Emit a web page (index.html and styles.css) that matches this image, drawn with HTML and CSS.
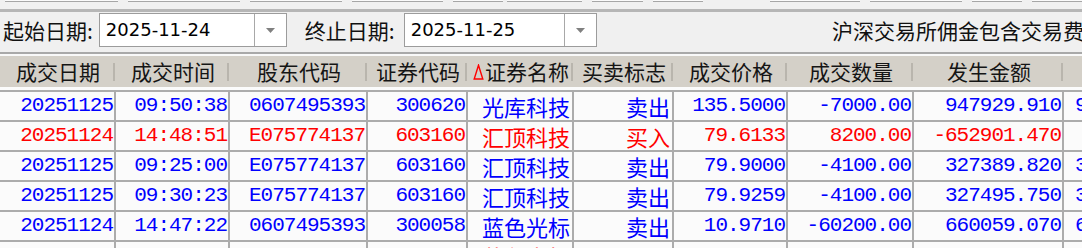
FILE: index.html
```html
<!DOCTYPE html>
<html lang="zh-CN">
<head>
<meta charset="utf-8">
<title>成交查询</title>
<link rel="stylesheet" href="styles.css">
</head>
<body>
<div class="topbar">
  <span class="tb w113"></span>
  <span class="tb w112"></span>
  <span class="tb w92"></span>
  <span class="tb w91"></span>
  <span class="tb w50"></span>
  <span class="tb w75 tight"></span>
  <span class="tb w51"></span>
  <span class="tb w50"></span>
  <span class="tb w90 far"></span>
  <span class="tb w92"></span>
  <span class="tb w50"></span>
  <span class="tb w60"></span>
</div>
<div class="toolbar">
  <span class="lbl">起始日期:</span>
  <div class="combo c1">
    <span class="val">2025-11-24</span>
    <span class="drop"><svg width="9" height="5" viewBox="0 0 9 5"><path d="M0 0H9L4.5 5Z" fill="#808080"/></svg></span>
  </div>
  <span class="lbl l2">终止日期:</span>
  <div class="combo c2">
    <span class="val">2025-11-25</span>
    <span class="drop"><svg width="9" height="5" viewBox="0 0 9 5"><path d="M0 0H9L4.5 5Z" fill="#808080"/></svg></span>
  </div>
  <div class="note">沪深交易所佣金包含交易费用</div>
</div>
<div class="head">
  <span class="hc">成交日期</span>
  <span class="hc">成交时间</span>
  <span class="hc">股东代码</span>
  <span class="hc">证券代码</span>
  <span class="hc"><svg class="sort" width="11" height="16" viewBox="0 0 11 16"><path d="M5.5 1.2L9.8 15H1.2Z" fill="none" stroke="#ff0000" stroke-width="1.4"/></svg>证券名称</span>
  <span class="hc">买卖标志</span>
  <span class="hc">成交价格</span>
  <span class="hc">成交数量</span>
  <span class="hc">发生金额</span>
  <span class="hc last"></span>
</div>
<div class="tbody">
  <div class="row first blue">
    <span class="num">20251125</span><span class="num">09:50:38</span><span class="num">0607495393</span><span class="num">300620</span><span class="cn">光库科技</span><span class="cn">卖出</span><span class="num">135.5000</span><span class="num">-7000.00</span><span class="num">947929.910</span><span class="num extra">947934.56</span>
  </div>
  <div class="row red">
    <span class="num">20251124</span><span class="num">14:48:51</span><span class="num">E075774137</span><span class="num">603160</span><span class="cn">汇顶科技</span><span class="cn">买入</span><span class="num">79.6133</span><span class="num">8200.00</span><span class="num">-652901.470</span><span class="num extra"></span>
  </div>
  <div class="row blue">
    <span class="num">20251125</span><span class="num">09:25:00</span><span class="num">E075774137</span><span class="num">603160</span><span class="cn">汇顶科技</span><span class="cn">卖出</span><span class="num">79.9000</span><span class="num">-4100.00</span><span class="num">327389.820</span><span class="num extra">327391.44</span>
  </div>
  <div class="row blue">
    <span class="num">20251125</span><span class="num">09:30:23</span><span class="num">E075774137</span><span class="num">603160</span><span class="cn">汇顶科技</span><span class="cn">卖出</span><span class="num">79.9259</span><span class="num">-4100.00</span><span class="num">327495.750</span><span class="num extra">327497.38</span>
  </div>
  <div class="row blue">
    <span class="num">20251124</span><span class="num">14:47:22</span><span class="num">0607495393</span><span class="num">300058</span><span class="cn">蓝色光标</span><span class="cn">卖出</span><span class="num">10.9710</span><span class="num">-60200.00</span><span class="num">660059.070</span><span class="num extra">660062.35</span>
  </div>
  <div class="row red">
    <span class="num">20251125</span><span class="num">09:26:33</span><span class="num">0607495393</span><span class="num">300058</span><span class="cn">蓝色光标</span><span class="cn">买入</span><span class="num">10.7300</span><span class="num">60200.00</span><span class="num">-646146.000</span><span class="num extra"></span>
  </div>
</div>
</body>
</html>
```
FILE: styles.css
```css
html, body {
  margin: 0;
  padding: 0;
}
body {
  width: 1082px;
  height: 248px;
  overflow: hidden;
  background: #f0f0f0;
  font-family: "Noto Sans CJK SC", sans-serif;
  color: #000;
}

/* strip of button bottoms at the very top */
.topbar {
  display: flex;
  align-items: flex-start;
  gap: 10px;
  height: 9px;
  padding-left: 5px;
  border-bottom: 3px solid #b6b6b6;
  overflow: hidden;
}
.tb {
  flex: none;
  height: 1px;
  background: #fafafa;
  border-bottom: 1px solid #a6a6a6;
}
.w113 { width: 113px; }
.w112 { width: 112px; }
.w92 { width: 92px; }
.w91 { width: 91px; }
.w90 { width: 90px; }
.w75 { width: 75px; }
.w60 { width: 60px; }
.w51 { width: 51px; }
.w50 { width: 50px; }
.tight { margin-left: -6px; }
.far { margin-left: 57px; }

/* date filter toolbar */
.toolbar {
  display: flex;
  align-items: flex-start;
  height: 39px;
  padding-top: 1px;
  padding-left: 3px;
  border-bottom: 2px solid #a9a9a9;
}
.lbl {
  font-size: 21px;
  line-height: 34px;
  white-space: nowrap;
  margin-right: 6px;
  color: #111;
}
.l2 {
  margin-left: 18px;
  margin-right: 9px;
}
.combo {
  display: flex;
  height: 34px;
  box-sizing: border-box;
  border: 1px solid #9c9c9c;
  background: #fff;
}
.c1 { width: 188px; }
.c2 { width: 193px; }
.val {
  flex: 1;
  font-family: "DejaVu Sans", sans-serif;
  font-size: 18px;
  line-height: 32px;
  padding-left: 6px;
  color: #000;
}
.drop {
  width: 31px;
  border-left: 1px solid #a8a8a8;
  display: flex;
  align-items: center;
  justify-content: center;
}
.note {
  margin-left: auto;
  width: 250px;
  flex: none;
  overflow: hidden;
  white-space: nowrap;
  font-size: 21px;
  line-height: 34px;
  color: #111;
}

/* column layout shared by header and rows */
.head, .row {
  display: grid;
  grid-template-columns: 116px 114px 138px 100px 106px 100px 114px 126px 150px 1fr;
}

.head {
  height: 31px;
  border-top: 2px solid #f9f9f9;
  background: #d4d0c8;
}
.hc {
  position: relative;
  display: flex;
  align-items: center;
  justify-content: center;
  font-size: 21px;
  line-height: 31px;
  color: #151515;
  white-space: nowrap;
}
.hc::after {
  content: "";
  position: absolute;
  right: 1px;
  top: 7px;
  bottom: 6px;
  width: 2px;
  background: #b9b5ad;
}
.hc.last::after { display: none; }
.sort { margin-right: 1px; }

.tbody {
  background: #fbfbfb;
  padding-top: 3px;
}
.row {
  border-bottom: 2px solid #acacac;
}
.row.first {
  border-top: 2px solid #acacac;
}
.row > span {
  box-sizing: border-box;
  border-right: 2px solid #acacac;
  text-align: right;
  padding-right: 2px;
  height: 28px;
  line-height: 28px;
  white-space: nowrap;
}
.num {
  font-family: "Liberation Mono", monospace;
  font-size: 21px;
  letter-spacing: -1px;
}
.row > span.num { padding-right: 1px; }
.cn {
  font-family: "Noto Sans CJK SC", sans-serif;
  font-size: 22px;
}
.row > span.extra {
  border-right: none;
  text-align: left;
  padding-left: 11px;
  overflow: hidden;
}
.blue { color: #0000ff; }
.red { color: #ff0000; }
```
